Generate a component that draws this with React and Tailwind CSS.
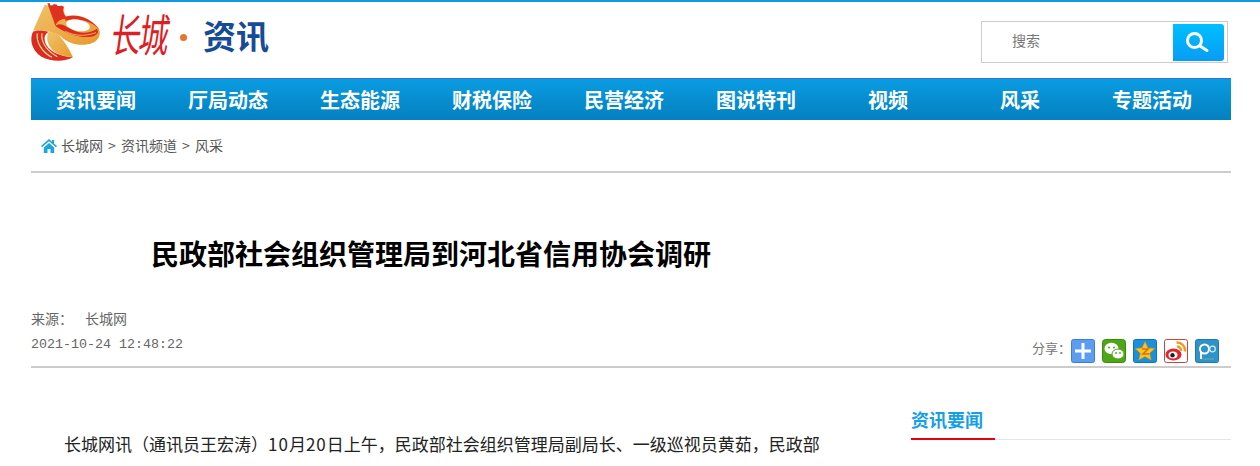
const cjk = { fontFamily: '"Noto Sans CJK SC", "Liberation Sans", sans-serif' };

const navItems = ['资讯要闻', '厅局动态', '生态能源', '财税保险', '民营经济', '图说特刊', '视频', '风采', '专题活动'];

function Logo() {
    return (
        <svg width="76" height="64" viewBox="0 0 228 192" className="block">
            <defs>
                <linearGradient id="gold" x1="0" y1="0" x2="1" y2="1">
                    <stop offset="0" stopColor="#efc26a" />
                    <stop offset="1" stopColor="#e99a2c" />
                </linearGradient>
            </defs>
            <path d="M50 14 L15 92 C35 88 70 92 100 110 C125 135 165 140 195 128 C214 120 220 100 212 85 C195 60 150 45 115 50 L105 30 Z" fill="url(#gold)" />
            <path d="M58 10 L66 10 L66 16 L76 16 L76 12 L88 14 L88 18 L98 18 L98 16 L108 20 C102 40 112 52 125 58 C105 52 88 62 82 78 C75 55 65 30 58 10 Z" fill="#e0301f" />
            <path d="M112 50 C150 38 195 58 214 90 C195 65 150 52 112 62 Z" fill="#e0301f" />
            <ellipse cx="150" cy="76" rx="36" ry="17" transform="rotate(10 150 76)" fill="#ffffff" />
            <path d="M82 78 C100 62 118 86 150 96 C175 102 195 94 207 86 C214 96 208 106 190 110 C160 115 118 104 82 78 Z" fill="#dc2c1e" />
            <path d="M112 94 C140 108 170 110 204 98" stroke="#f3c675" strokeWidth="2.500" fill="none" />
            <path d="M15 95 C4 116 10 150 40 170 C70 186 110 186 135 172 C105 170 70 160 55 135 C45 116 50 102 62 96 C45 90 25 90 15 95 Z" fill="#dc2c1e" />
            <path d="M28 100 C24 125 40 155 72 172 M42 100 C38 122 52 150 88 170" stroke="#f7dca0" strokeWidth="3.500" fill="none" />
            <path d="M62 96 C50 116 62 150 92 162 C106 168 120 170 135 172 C125 150 110 125 95 108 C85 100 72 96 62 96 Z" fill="url(#gold)" />
        </svg>
    );
}

function ShareIcons() {
    return (
        <div className="flex items-center gap-[7px]">
            <svg width="24" height="24" viewBox="0 0 24 24">
                <rect x="0.5" y="0.5" width="23" height="23" rx="2" fill="#5b9df0" stroke="#3f7fd0" />
                <path d="M12 4v16M4 12h16" stroke="#fff" strokeWidth="3" />
            </svg>
            <svg width="24" height="24" viewBox="0 0 24 24">
                <rect x="0.5" y="0.5" width="23" height="23" rx="3" fill="#4fa616" stroke="#3a8a0c" />
                <ellipse cx="9.5" cy="9.5" rx="7" ry="5.8" fill="#fff" />
                <ellipse cx="16" cy="15" rx="6" ry="5" fill="#fff" stroke="#4fa616" />
                <circle cx="7" cy="8.5" r="1" fill="#4fa616" />
                <circle cx="12" cy="8.5" r="1" fill="#4fa616" />
                <circle cx="14" cy="14" r="0.9" fill="#4fa616" />
                <circle cx="18" cy="14" r="0.9" fill="#4fa616" />
            </svg>
            <svg width="24" height="24" viewBox="0 0 24 24">
                <rect x="0.5" y="0.5" width="23" height="23" rx="2" fill="#1c8fdc" stroke="#1273b8" />
                <path d="M12 2.500l2.900 6.400 6.800.7-5.100 4.600 1.500 6.800-6.100-3.500-6.100 3.500 1.500-6.800L2.300 9.600l6.800-.7z" fill="#fbc715" stroke="#e58e0c" strokeWidth="0.6" />
                <path d="M9 10h6l-5 5h6" stroke="#e56a10" strokeWidth="1.600" fill="none" />
            </svg>
            <svg width="24" height="24" viewBox="0 0 24 24">
                <rect x="0.5" y="0.5" width="23" height="23" rx="2" fill="#fff" stroke="#c9423f" />
                <ellipse cx="9.500" cy="15.500" rx="8" ry="6" fill="#e0262b" />
                <ellipse cx="9" cy="16" rx="4.500" ry="3.500" fill="#fff" />
                <circle cx="8.500" cy="16.300" r="2.200" fill="#222" />
                <path d="M12.500 3.500a8 8 0 0 1 8.500 9M13 7.500a4 4 0 0 1 4 4.500" stroke="#f39a1e" strokeWidth="2.400" fill="none" />
            </svg>
            <svg width="24" height="24" viewBox="0 0 24 24">
                <rect x="0.5" y="0.5" width="23" height="23" rx="2" fill="#2f93c9" stroke="#1f7aac" />
                <circle cx="9.500" cy="10" r="4.500" fill="none" stroke="#fff" strokeWidth="2" />
                <path d="M6 12v8" stroke="#fff" strokeWidth="2" />
                <circle cx="17.500" cy="10" r="2.800" fill="none" stroke="#d5eefa" strokeWidth="1.200" />
                <path d="M7 20h12" stroke="#58b7a8" strokeWidth="1" />
            </svg>
        </div>
    );
}

export default function App() {
    return (
        <div className="h-[466px] overflow-hidden bg-white border-t-2 border-[#0f9be0]" style={cjk}>
            <div className="w-[1200px] ml-[31px]">
                {/* Header */}
                <header className="flex h-[76px] items-start justify-between">
                    <div className="flex items-start">
                        <div className="-mt-[2px] -ml-[3px]"><Logo /></div>
                        <div className="ml-[8px] mt-[8px] w-[60px] origin-center scale-y-[1.5] -skew-x-12 text-[30px] leading-[44px] font-normal tracking-[-2px] whitespace-nowrap text-[#dc1f26]">长城</div>
                        <div className="ml-[8px] mt-[32px] size-[7px] rounded-full bg-[#e8732a]"></div>
                        <div className="ml-[16px] mt-[9px] text-[33px] leading-[48px] font-bold whitespace-nowrap text-[#164b96]">资讯</div>
                    </div>
                    <div className="mr-[3px] mt-[19px] flex h-[42px] w-[247px] items-center justify-between border border-[#cccccc] pr-[3px]">
                        <span className="ml-[30px] -mt-[4px] text-sm text-[#777777]">搜索</span>
                        <div className="flex h-[37px] w-[51px] items-center rounded-tr-[3px] rounded-br-[3px] bg-gradient-to-b from-[#00bfff] to-[#0a9cf5] pl-[9px]">
                            <svg width="28" height="24" viewBox="0 0 28 24" fill="none" stroke="#fff">
                                <circle cx="12.500" cy="10.500" r="7" strokeWidth="3" />
                                <path d="M18 16L25 20.500" strokeWidth="3" strokeLinecap="round" />
                            </svg>
                        </div>
                    </div>
                </header>

                {/* Nav */}
                <nav className="grid h-[42px] grid-cols-[repeat(9,132px)] border-t border-[#2d76cf] bg-gradient-to-b from-[#0a9ce2] to-[#0480bf]">
                    {navItems.map((item) => (
                        <a key={item} className="pr-[2px] text-center text-[20px] leading-[41px] font-bold text-white">{item}</a>
                    ))}
                </nav>

                {/* Breadcrumb */}
                <div className="flex h-[53px] items-center border-b-2 border-[#cccccc] pb-[1px] pl-[10px] text-sm text-[#555555]">
                    <svg width="16" height="15" viewBox="0 0 16 15" className="mr-[4px]">
                        <path d="M8 1L0 8l1 1.200L8 3.200l7 6L16 8l-3-2.600V2h-2v1.700z" fill="#1ba6dc" />
                        <path d="M2.800 9.500L8 5l5.200 4.500V15H9.500v-4h-3v4H2.800z" fill="#1ba6dc" />
                    </svg>
                    <span>长城网</span>
                    <span className="w-[18px] text-center">&gt;</span>
                    <span>资讯频道</span>
                    <span className="w-[18px] text-center">&gt;</span>
                    <span>风采</span>
                </div>

                {/* Title */}
                <h1 className="mt-[58px] w-[800px] text-center text-[28px] leading-[44px] font-bold text-black">民政部社会组织管理局到河北省信用协会调研</h1>

                {/* Meta */}
                <div className="mt-[33px] flex h-[60px] items-start justify-between border-b-2 border-[#cccccc]">
                    <div className="text-[#666666]">
                        <div className="text-sm leading-[20px]">来源：<span className="ml-[12px]">长城网</span></div>
                        <div className="mt-[7px] text-[13.33px] leading-[20px]" style={{ fontFamily: '"Liberation Mono", monospace' }}>2021-10-24 12:48:22</div>
                    </div>
                    <div className="mr-[12px] mt-[31px] flex items-center">
                        <span className="-mt-[6px] -ml-[1px] text-[13px] text-[#777777]">分享：</span>
                        <ShareIcons />
                    </div>
                </div>

                {/* Body */}
                <div className="flex items-start justify-between">
                    <p className="mt-[60px] w-[800px] indent-[33px] text-[17px] leading-[32px] text-[#222222]">长城网讯（通讯员王宏涛）<span className="tracking-[1px]">10</span>月<span className="tracking-[1px]">20</span>日上午，民政部社会组织管理局副局长、一级巡视员黄茹，民政部</p>
                    <aside className="mt-[38px] w-[320px]">
                        <div className="h-[34px] border-b border-[#e5e5e5]">
                            <div className="h-[34px] w-[84px] border-b-2 border-[#e60012] text-[18px] leading-[26px] font-bold text-[#15a0e6]">资讯要闻</div>
                        </div>
                    </aside>
                </div>
            </div>
        </div>
    );
}
